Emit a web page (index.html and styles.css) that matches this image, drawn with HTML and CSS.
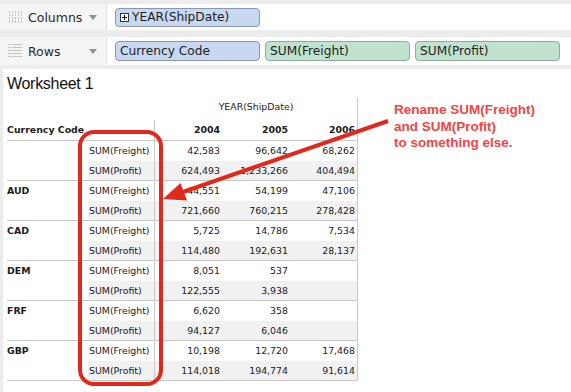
FILE: index.html
```html
<!DOCTYPE html>
<html lang="en">
<head>
    <meta charset="UTF-8">
    <title>Worksheet 1</title>
    <link rel="stylesheet" href="styles.css">
</head>
<body>
    <div class="shelves">
        <div class="shelf shelf-cols">
            <div class="shelf-label">
                <svg class="grip" width="14" height="14" viewBox="0 0 14 14">
                    <g fill="#c4c4c4">
                        <rect x="1" y="1" width="1" height="12"/>
                        <rect x="4" y="1" width="1" height="12"/>
                        <rect x="7" y="1" width="1" height="12"/>
                        <rect x="10" y="1" width="1" height="12"/>
                        <rect x="13" y="1" width="1" height="12"/>
                    </g>
                    <g fill="#f5f5f5">
                        <rect x="0" y="3" width="14" height="1"/>
                        <rect x="0" y="6" width="14" height="1"/>
                        <rect x="0" y="9" width="14" height="1"/>
                    </g>
                </svg>
                <span class="shelf-name">Columns</span>
                <svg class="caret" width="8" height="5" viewBox="0 0 8 5"><path d="M0 0h8L4 5z" fill="#8e8e8e"/></svg>
            </div>
            <div class="shelf-drop">
                <span class="pill pill-dim">
                    <svg class="plus" width="9" height="9" viewBox="0 0 9 9">
                        <rect x="0.5" y="0.5" width="8" height="8" fill="#fff" stroke="#333"/>
                        <path d="M2 4.5h5M4.5 2v5" stroke="#111"/>
                    </svg>YEAR(ShipDate)</span>
            </div>
        </div>
        <div class="shelf shelf-rows">
            <div class="shelf-label">
                <svg class="grip" width="14" height="16" viewBox="0 0 14 16">
                    <g fill="#c4c4c4">
                        <rect x="0" y="1" width="14" height="1"/>
                        <rect x="0" y="4" width="14" height="1"/>
                        <rect x="0" y="7" width="14" height="1"/>
                        <rect x="0" y="10" width="14" height="1"/>
                        <rect x="0" y="13" width="14" height="1"/>
                    </g>
                    <g fill="#f5f5f5">
                        <rect x="3" y="0" width="1" height="16"/>
                    </g>
                </svg>
                <span class="shelf-name">Rows</span>
                <svg class="caret" width="8" height="5" viewBox="0 0 8 5"><path d="M0 0h8L4 5z" fill="#8e8e8e"/></svg>
            </div>
            <div class="shelf-drop">
                <span class="pill pill-dim">Currency Code</span>
                <span class="pill pill-meas">SUM(Freight)</span>
                <span class="pill pill-meas">SUM(Profit)</span>
            </div>
        </div>
    </div>

    <div class="sheet">
        <h1 class="sheet-title">Worksheet 1</h1>

        <div class="xt">
            <div class="xt-top">
                <div class="xt-spacer"></div>
                <div class="xt-coltitle">YEAR(ShipDate)</div>
            </div>
            <div class="xt-head">
                <div class="c-dim">Currency Code</div>
                <div class="c-meas"></div>
                <div class="c-vals">
                    <div class="c-num">2004</div>
                    <div class="c-num">2005</div>
                    <div class="c-num">2006</div>
                </div>
            </div>

            <div class="xt-group">
                <div class="c-dim"></div>
                <div class="xt-rows">
                    <div class="xt-row"><div class="c-meas">SUM(Freight)</div><div class="c-vals"><div class="c-num">42,583</div><div class="c-num">96,642</div><div class="c-num">68,262</div></div></div>
                    <div class="xt-row alt"><div class="c-meas">SUM(Profit)</div><div class="c-vals"><div class="c-num">624,493</div><div class="c-num">1,233,266</div><div class="c-num">404,494</div></div></div>
                </div>
            </div>

            <div class="xt-group">
                <div class="c-dim">AUD</div>
                <div class="xt-rows">
                    <div class="xt-row"><div class="c-meas">SUM(Freight)</div><div class="c-vals"><div class="c-num">44,551</div><div class="c-num">54,199</div><div class="c-num">47,106</div></div></div>
                    <div class="xt-row alt"><div class="c-meas">SUM(Profit)</div><div class="c-vals"><div class="c-num">721,660</div><div class="c-num">760,215</div><div class="c-num">278,428</div></div></div>
                </div>
            </div>

            <div class="xt-group">
                <div class="c-dim">CAD</div>
                <div class="xt-rows">
                    <div class="xt-row"><div class="c-meas">SUM(Freight)</div><div class="c-vals"><div class="c-num">5,725</div><div class="c-num">14,786</div><div class="c-num">7,534</div></div></div>
                    <div class="xt-row alt"><div class="c-meas">SUM(Profit)</div><div class="c-vals"><div class="c-num">114,480</div><div class="c-num">192,631</div><div class="c-num">28,137</div></div></div>
                </div>
            </div>

            <div class="xt-group">
                <div class="c-dim">DEM</div>
                <div class="xt-rows">
                    <div class="xt-row"><div class="c-meas">SUM(Freight)</div><div class="c-vals"><div class="c-num">8,051</div><div class="c-num">537</div><div class="c-num"></div></div></div>
                    <div class="xt-row alt"><div class="c-meas">SUM(Profit)</div><div class="c-vals"><div class="c-num">122,555</div><div class="c-num">3,938</div><div class="c-num"></div></div></div>
                </div>
            </div>

            <div class="xt-group">
                <div class="c-dim">FRF</div>
                <div class="xt-rows">
                    <div class="xt-row"><div class="c-meas">SUM(Freight)</div><div class="c-vals"><div class="c-num">6,620</div><div class="c-num">358</div><div class="c-num"></div></div></div>
                    <div class="xt-row alt"><div class="c-meas">SUM(Profit)</div><div class="c-vals"><div class="c-num">94,127</div><div class="c-num">6,046</div><div class="c-num"></div></div></div>
                </div>
            </div>

            <div class="xt-group">
                <div class="c-dim">GBP</div>
                <div class="xt-rows">
                    <div class="xt-row"><div class="c-meas">SUM(Freight)</div><div class="c-vals"><div class="c-num">10,198</div><div class="c-num">12,720</div><div class="c-num">17,468</div></div></div>
                    <div class="xt-row alt"><div class="c-meas">SUM(Profit)</div><div class="c-vals"><div class="c-num">114,018</div><div class="c-num">194,774</div><div class="c-num">91,614</div></div></div>
                </div>
            </div>
        </div>
    </div>

    <!-- callout drawn over the crosstab -->
    <svg class="markup" width="571" height="392" viewBox="0 0 571 392">
        <rect x="80" y="132" width="81" height="252" rx="14" fill="none" stroke="#e0281d" stroke-width="4"/>
        <line x1="388" y1="121" x2="183" y2="192" stroke="#e0281d" stroke-width="4"/>
        <polygon points="163,199 187,200.5 180.5,183" fill="#e0281d"/>
    </svg>
    <div class="note">Rename SUM(Freight)<br>and SUM(Profit)<br>to something else.</div>
</body>
</html>
```

FILE: styles.css
```css
* {
    margin: 0;
    padding: 0;
    box-sizing: border-box;
}

body {
    font-family: 'DejaVu Sans', sans-serif;
    background: #ececec;
    color: #222;
    width: 571px;
    height: 392px;
    overflow: hidden;
    position: relative;
}

/* Shelves */
.shelves {
    padding-top: 4px;
    display: flex;
    flex-direction: column;
    gap: 7px;
}

.shelf {
    display: flex;
    background: #fff;
}

.shelf-cols {
    height: 26px;
}

.shelf-rows {
    height: 28px;
}

.shelf-label {
    width: 107px;
    display: flex;
    align-items: center;
    padding-left: 8px;
    background: #f5f5f5;
    border-right: 1px solid #e3e3e3;
}

.shelf-name {
    font-size: 12.5px;
    color: #2a2a2a;
    margin-left: 6px;
    flex: 1;
}

.caret {
    margin-right: 9px;
}

.shelf-drop {
    flex: 1;
    display: flex;
    align-items: center;
    gap: 5px;
    padding-left: 8px;
}

.pill {
    width: 145px;
    height: 19px;
    border-radius: 4px;
    font-size: 12.2px;
    line-height: 17px;
    padding-left: 4px;
    color: #1e1e1e;
    display: flex;
    align-items: center;
    white-space: nowrap;
}

.shelf-rows .pill {
    height: 20px;
}

.pill-dim {
    background: #c7d8f0;
    border: 1px solid #8597b3;
}

.pill-meas {
    background: #c0e2cf;
    border: 1px solid #8fac9c;
}

.plus {
    margin-right: 3px;
}

/* Worksheet */
.sheet {
    margin-top: 4px;
    background: #fff;
    border-left: 3px solid #ececec;
    height: 323px;
}

.sheet-title {
    font-family: 'Liberation Sans', Arial, sans-serif;
    font-weight: 400;
    font-size: 16px;
    line-height: 18px;
    letter-spacing: -0.3px;
    color: #111;
    padding: 6px 0 0 4px;
    margin-bottom: 5px;
}

.xt {
    margin-left: 4px;
    width: 351px;
    border-right: 1px solid #c9c9c9;
    font-size: 9.4px;
    color: #1a1a1a;
}

.xt-top {
    display: flex;
    height: 22px;
}

.xt-spacer {
    width: 148px;
}

.xt-coltitle {
    flex: 1;
    text-align: center;
    line-height: 18px;
}

.xt-head {
    display: flex;
    height: 21px;
    border-bottom: 1px solid #c9c9c9;
    font-weight: 700;
    line-height: 20px;
}

.c-dim {
    width: 81px;
    font-weight: 700;
}

.c-meas {
    width: 66px;
    padding-left: 1px;
    white-space: nowrap;
}

.c-vals {
    display: flex;
    border-left: 1px solid #c9c9c9;
}

.c-num {
    width: 67px;
    text-align: right;
    padding-right: 2px;
}

.c-num:nth-child(2) {
    width: 68px;
}

.xt-group {
    display: flex;
    border-bottom: 1px solid #c9c9c9;
}

.xt-group .c-dim {
    line-height: 20px;
}

.xt-row {
    display: flex;
    height: 20px;
    line-height: 20px;
}

.xt-row.alt {
    height: 19px;
    line-height: 19px;
    background: #f1f1f1;
}

/* Callout */
.markup {
    position: absolute;
    left: 0;
    top: 0;
    pointer-events: none;
}

.note {
    position: absolute;
    left: 394px;
    top: 102px;
    font-family: 'Liberation Sans', Arial, sans-serif;
    font-weight: 700;
    font-size: 13.5px;
    line-height: 16.5px;
    color: #f34444;
}
```
